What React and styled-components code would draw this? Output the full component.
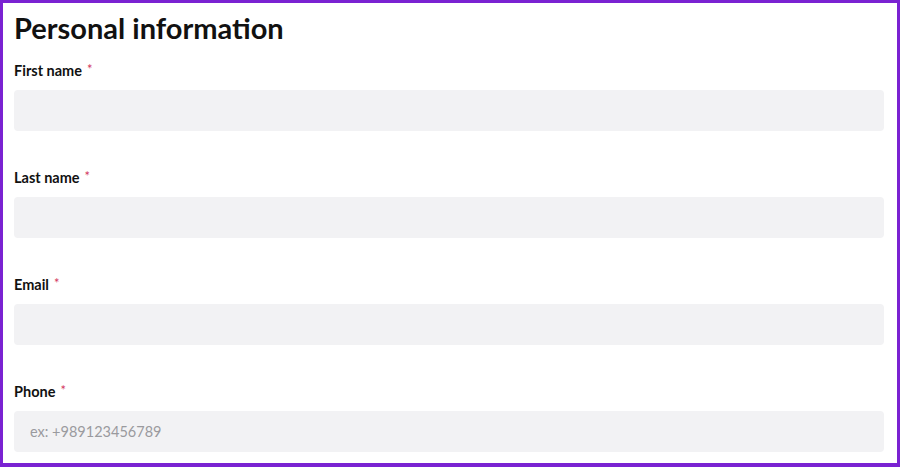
import React from 'react';
import styled, { createGlobalStyle } from 'styled-components';

const GlobalStyle = createGlobalStyle`
  html, body {
    margin: 0;
    padding: 0;
    background: #ffffff;
  }
  * {
    box-sizing: border-box;
  }
`;

const Frame = styled.div`
  width: 900px;
  height: 467px;
  border: 3px solid #7a22d2;
  border-bottom-width: 4px;
  background: #ffffff;
  padding: 7px 13px 0 11px;
  font-family: Lato, "Open Sans", sans-serif;
  overflow: hidden;
`;

const Title = styled.h1`
  margin: 0;
  font-size: 29px;
  line-height: 36px;
  font-weight: 700;
  color: #111111;
`;

const Form = styled.form`
  display: flex;
  flex-direction: column;
  gap: 37px;
  margin-top: 15px;
`;

const FormGroup = styled.div`
  display: flex;
  flex-direction: column;
  gap: 9px;
`;

const Label = styled.label`
  display: flex;
  align-items: flex-start;
  height: 20px;
  font-size: 14.5px;
  line-height: 20px;
  font-weight: 700;
  color: #111111;
`;

const Required = styled.span`
  color: #d2365c;
  font-weight: 400;
  margin-left: 5px;
  font-size: 13px;
  line-height: 16px;
`;

const Input = styled.input`
  width: 100%;
  height: 41px;
  border: none;
  border-radius: 4px;
  background: #f2f2f4;
  padding: 0 16px;
  font-family: Lato, "Open Sans", sans-serif;
  font-size: 14.5px;
  color: #333333;
  outline: none;

  &::placeholder {
    color: #9a9a9e;
  }
`;

const fields = [
  { id: 'firstName', label: 'First name', type: 'text' },
  { id: 'lastName', label: 'Last name', type: 'text' },
  { id: 'email', label: 'Email', type: 'email' },
  { id: 'phone', label: 'Phone', type: 'tel', placeholder: 'ex: +989123456789' },
];

const App = () => {
  return (
    <>
      <GlobalStyle />
      <Frame>
        <Title>Personal information</Title>
        <Form onSubmit={(e) => e.preventDefault()}>
          {fields.map((f) => (
            <FormGroup key={f.id}>
              <Label htmlFor={f.id}>
                {f.label}
                <Required>*</Required>
              </Label>
              <Input id={f.id} name={f.id} type={f.type} placeholder={f.placeholder} />
            </FormGroup>
          ))}
        </Form>
      </Frame>
    </>
  );
};

export default App;
